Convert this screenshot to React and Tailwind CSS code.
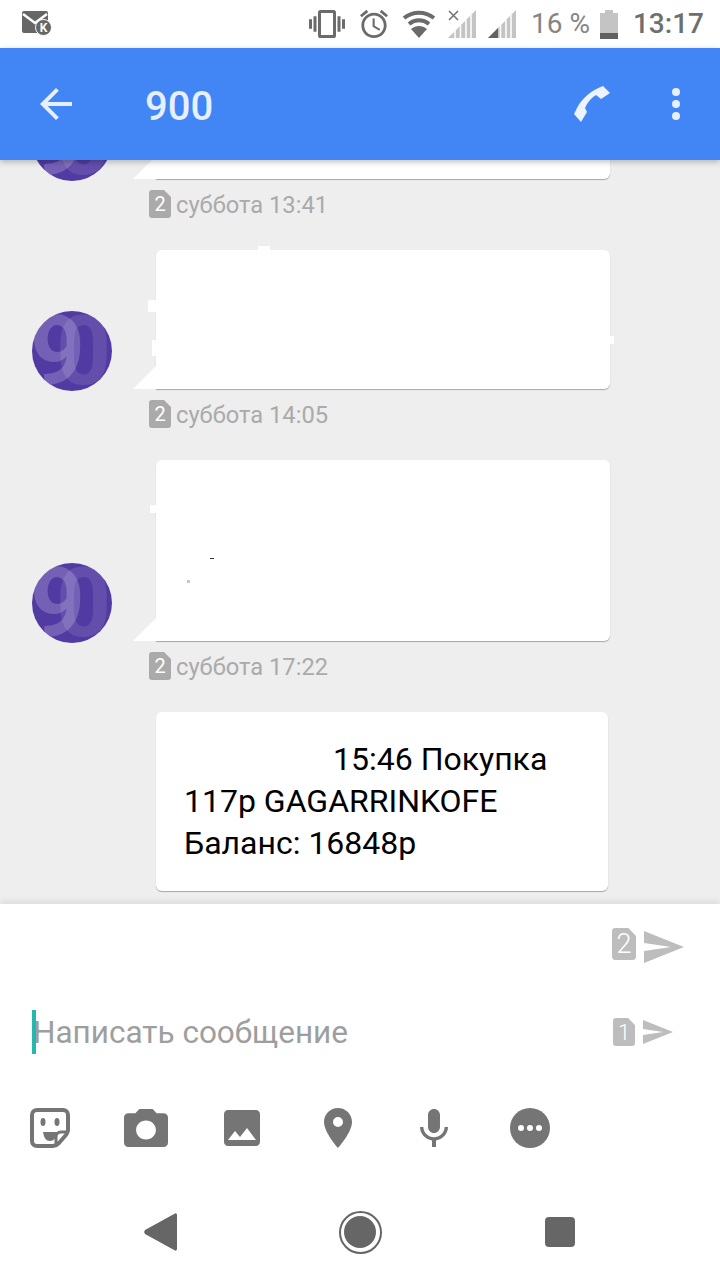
const Sim = ({ n, className, fill, textClass }) => (
    <div className={`relative shrink-0 flex items-center justify-center ${className}`}>
        <svg viewBox="0 0 22 28" preserveAspectRatio="none" className="absolute inset-0 w-full h-full">
            <path d="M3 0H15L22 7V25a3 3 0 0 1-3 3H3a3 3 0 0 1-3-3V3a3 3 0 0 1 3-3Z" fill={fill} />
        </svg>
        <span className={`relative text-white ${textClass}`}>{n}</span>
    </div>
);

const Send = ({ className }) => (
    <svg viewBox="0 0 40 32" preserveAspectRatio="none" className={className}>
        <path d="M0 0L40 16L0 32V20L27 16L0 12Z" fill="#bdbdbd" />
    </svg>
);

const Stamp = ({ time }) => (
    <div className="flex items-center h-7 mt-[11px] ml-[149px]">
        <Sim n="2" className="w-[22px] h-7" fill="#aaaaaa" textClass="text-[20px]" />
        <span className="ml-[5px] pt-[2px] text-[23.7px] leading-7 text-[#aaaaaa] whitespace-nowrap">{time}</span>
    </div>
);

const Avatar = () => (
    <div className="relative w-20 h-20 shrink-0 rounded-full overflow-hidden bg-[#523aa3] ml-8 -mb-[2px]">
        <span className="absolute -left-[2px] top-0 text-[96px] leading-[80px] font-bold text-white/20">9</span>
        <span className="absolute left-[24px] top-0 text-[96px] leading-[80px] font-bold text-white/10">0</span>
    </div>
);

const Tail = () => (
    <svg viewBox="0 0 23 23" className="absolute -left-[23px] bottom-0 w-[23px] h-[23px]">
        <path d="M23 0V23H0Z" fill="#ffffff" />
        <path d="M0 23.500H23" stroke="#c4c4c4" strokeWidth="1" />
    </svg>
);

const Message = ({ height, time, children }) => (
    <>
        <div className="flex items-end shrink-0">
            <Avatar />
            <div className={`relative ml-[44px] w-[454px] ${height} bg-white rounded-md rounded-bl-none shadow-[0_1px_1px_rgba(0,0,0,0.3)]`}>
                <Tail />
                {children}
            </div>
        </div>
        <Stamp time={time} />
    </>
);

const Speck = ({ className }) => <div className={`absolute bg-white ${className}`} />;

const Signal = ({ dark, cross }) => (
    <svg viewBox="0 0 28 28" className="w-7 h-7 shrink-0">
        <path d="M0 28L28 0V28Z" fill="#c4c4c4" />
        <path d="M7 28V20M12.500 28V15M18 28V10M23 28V5" stroke="#ffffff" strokeWidth="1.500" />
        {dark && <path d="M0 28L10 18V28Z" fill="#616161" />}
        {cross && <path d="M1 1L10 10M10 1L1 10" stroke="#757575" strokeWidth="1.600" />}
    </svg>
);

export default function App() {
    return (
        <div className="w-[720px] h-[1280px] flex flex-col overflow-hidden bg-white [font-family:Roboto,sans-serif]">
            {/* status bar */}
            <div className="h-12 shrink-0 flex items-center pl-[22px] pr-4 text-[#757575]">
                <div className="relative w-[30px] h-[25px] -mt-[1px]">
                    <svg viewBox="0 0 26 22" className="w-[26px] h-[22px]">
                        <rect width="26" height="22" rx="2" fill="#666666" />
                        <path d="M1 3L13 12L25 3" stroke="#ffffff" strokeWidth="2.500" fill="none" />
                    </svg>
                    <div className="absolute right-0 bottom-0 w-[17px] h-[17px] rounded-full bg-[#666666] border border-white flex items-center justify-center text-white text-[12px] leading-none font-bold">K</div>
                </div>
                <svg viewBox="0 3 24 18" className="ml-auto w-9 h-7 shrink-0" preserveAspectRatio="none">
                    <path fill="#6b6b6b" d="M0 15h2V9H0v6zm3 2h2V7H3v10zm19-8v6h2V9h-2zm-3 8h2V7h-2v10zM16.500 3h-9C6.670 3 6 3.670 6 4.500v15c0 .83.67 1.500 1.500 1.500h9c.83 0 1.500-.67 1.500-1.500v-15c0-.83-.67-1.500-1.500-1.500zM16 19H8V5h8v14z" />
                </svg>
                <svg viewBox="2 2 20 20" className="ml-[15px] w-7 h-7 shrink-0">
                    <path fill="#6b6b6b" d="M22 5.720l-4.600-3.860-1.290 1.530 4.600 3.860L22 5.720zM7.880 3.390L6.600 1.860 2 5.710l1.290 1.530 4.590-3.850zM12.500 8H11v6l4.750 2.850.75-1.230-4-2.370V8zM12 4c-4.970 0-9 4.030-9 9s4.030 9 9 9 9-4.030 9-9-4.030-9-9-9zm0 16c-3.870 0-7-3.130-7-7s3.130-7 7-7 7 3.130 7 7-3.130 7-7 7z" />
                </svg>
                <svg viewBox="0 0 34 28" className="ml-[14px] w-[34px] h-7 shrink-0">
                    <path d="M2 8C11 1 23 1 32 8M7 14C13 9 21 9 27 14" stroke="#6b6b6b" strokeWidth="4" fill="none" />
                    <path d="M17 28L9 19C14 15 20 15 25 19Z" fill="#6b6b6b" />
                </svg>
                <div className="ml-3 shrink-0"><Signal cross /></div>
                <div className="ml-3 shrink-0"><Signal dark /></div>
                <span className="ml-[15px] text-[28px] leading-none text-[#858585] whitespace-nowrap">16 %</span>
                <svg viewBox="0 0 18 29" className="ml-[10px] w-[18px] h-[29px] shrink-0">
                    <path d="M5 0H13V3H18V29H0V3H5Z" fill="#c4c4c4" />
                    <rect y="23" width="18" height="6" fill="#616161" />
                </svg>
                <span className="ml-[15px] text-[28px] leading-none font-medium text-[#6f6f6f] whitespace-nowrap">13:17</span>
            </div>

            {/* header */}
            <div className="relative z-10 h-[112px] shrink-0 flex items-center bg-[#4285f4] shadow-[0_2px_6px_rgba(0,0,0,0.25)]">
                <svg viewBox="4 4 16 16" className="ml-10 w-8 h-8 shrink-0">
                    <path fill="#e6effd" d="M20 11H7.830l5.590-5.590L12 4l-8 8 8 8 1.410-1.410L7.830 13H20v-2z" />
                </svg>
                <span className="ml-[73px] pt-[6px] text-[40px] leading-none font-medium text-[#e6effd]">900</span>
                <svg viewBox="0 0 38 38" className="ml-auto w-[38px] h-[38px] shrink-0">
                    <path fill="#ecf3fe" d="M29 1L36 8L27 14L22 10C17 13 13 18 11 23L13 27L7 37L0 29L3 23C8 13 18 5 29 1Z" />
                </svg>
                <div className="ml-[60px] mr-10 flex flex-col gap-1 shrink-0">
                    <div className="w-2 h-2 rounded-full bg-[#e6effd]" />
                    <div className="w-2 h-2 rounded-full bg-[#e6effd]" />
                    <div className="w-2 h-2 rounded-full bg-[#e6effd]" />
                </div>
            </div>

            {/* messages */}
            <div className="h-[744px] shrink-0 flex flex-col justify-end overflow-hidden bg-[#eeeeee] pb-[13px]">
                <Message height="h-[120px]" time="суббота 13:41" />
                <div className="h-8 shrink-0" />
                <Message height="h-[139px]" time="суббота 14:05">
                    <Speck className="-left-2 top-[50px] w-2 h-3" />
                    <Speck className="-left-1 top-[90px] w-1 h-4" />
                    <Speck className="left-[102px] -top-1 w-3 h-1" />
                    <Speck className="-right-1 top-[86px] w-1 h-2" />
                </Message>
                <div className="h-8 shrink-0" />
                <Message height="h-[181px]" time="суббота 17:22">
                    <Speck className="-left-[6px] top-[45px] w-[6px] h-2" />
                    <div className="absolute left-[54px] top-[98px] w-[4px] h-px bg-[#333333]" />
                    <div className="absolute left-[31px] top-[120px] w-[3px] h-[3px] bg-[#c8c8c8]" />
                </Message>
                <div className="h-8 shrink-0" />
                <div className="shrink-0 ml-[156px] w-[452px] h-[179px] bg-white rounded-md shadow-[0_1px_1px_rgba(0,0,0,0.3)] pt-[26px] pl-[28px] text-[32px] leading-[42px] text-black">
                    <div className="pl-[149px]">15:46 Покупка</div>
                    <div>117р GAGARRINKOFE</div>
                    <div>Баланс: 16848р</div>
                </div>
            </div>

            {/* composer */}
            <div className="relative flex-1 flex flex-col bg-white shadow-[0_-3px_6px_rgba(0,0,0,0.08)]">
                <div className="h-8 mt-6 flex items-center justify-end pr-9 shrink-0">
                    <Sim n="2" className="w-6 h-8" fill="#bdbdbd" textClass="text-[27px] font-light" />
                    <Send className="ml-2 mt-[6px] w-10 h-8" />
                </div>
                <div className="h-[44px] mt-[50px] flex items-center shrink-0">
                    <div className="ml-8 w-1 h-[44px] bg-[#26b8b0]" />
                    <span className="-ml-[3px] pt-[2px] text-[31.5px] leading-none text-[#9e9e9e] whitespace-nowrap">Написать сообщение</span>
                    <Sim n="1" className="ml-auto w-[22px] h-7" fill="#bdbdbd" textClass="text-[22px] font-light" />
                    <Send className="ml-2 mr-[47px] w-[30px] h-6" />
                </div>
                <div className="h-10 mt-[54px] flex items-center pl-[2px] shrink-0">
                    <div className="w-24 flex justify-center">
                        <svg viewBox="0 0 40 40" className="w-10 h-10">
                            <path d="M7 2H33C36 2 38 4 38 7V22C38 24 37 25 36 27L29 35C27 37 25 38 23 38H7C4 38 2 36 2 33V7C2 4 4 2 7 2Z" fill="none" stroke="#757575" strokeWidth="4" />
                            <path d="M37 24H31C28 24 26 26 26 29V37" fill="none" stroke="#757575" strokeWidth="3" />
                            <ellipse cx="13" cy="14" rx="2.500" ry="4" fill="#757575" />
                            <ellipse cx="27" cy="14" rx="2.500" ry="4" fill="#757575" />
                            <path d="M13 24H27C26 30 24 33 20 33C16 33 14 30 13 24Z" fill="#757575" />
                        </svg>
                    </div>
                    <div className="w-24 flex justify-center">
                        <svg viewBox="2 2 20 18" className="w-11 h-[38px]" preserveAspectRatio="none">
                            <path fill="#757575" d="M9 2L7.170 4H4c-1.100 0-2 .9-2 2v12c0 1.100.9 2 2 2h16c1.100 0 2-.9 2-2V6c0-1.100-.9-2-2-2h-3.170L15 2H9zm3 14.500c-2.500 0-4.500-2-4.500-4.500s2-4.500 4.500-4.500 4.500 2 4.500 4.500-2 4.500-4.500 4.500z" />
                        </svg>
                    </div>
                    <div className="w-24 flex justify-center">
                        <svg viewBox="3 3 18 18" className="w-9 h-9">
                            <path fill="#757575" d="M21 19V5c0-1.100-.9-2-2-2H5c-1.100 0-2 .9-2 2v14c0 1.100.9 2 2 2h14c1.100 0 2-.9 2-2zM8.500 13.500l2.500 3.010L14.500 12l4.500 6H5l3.500-4.500z" />
                        </svg>
                    </div>
                    <div className="w-24 flex justify-center">
                        <svg viewBox="5 2 14 20" className="w-7 h-10">
                            <path fill="#757575" d="M12 2C8.130 2 5 5.130 5 9c0 5.250 7 13 7 13s7-7.750 7-13c0-3.870-3.130-7-7-7zm0 9.500a2.500 2.500 0 0 1 0-5 2.500 2.500 0 0 1 0 5z" />
                        </svg>
                    </div>
                    <div className="w-24 flex justify-center">
                        <svg viewBox="5 2 14 19" className="w-7 h-[38px]">
                            <path fill="#757575" d="M12 14c1.660 0 2.990-1.340 2.990-3L15 5c0-1.660-1.340-3-3-3S9 3.340 9 5v6c0 1.660 1.340 3 3 3zm5.300-3c0 3-2.540 5.100-5.300 5.100S6.700 14 6.700 11H5c0 3.410 2.720 6.230 6 6.720V21h2v-3.280c3.280-.48 6-3.300 6-6.720h-1.700z" />
                        </svg>
                    </div>
                    <div className="w-24 flex justify-center">
                        <div className="w-10 h-10 rounded-full bg-[#757575] flex items-center justify-center gap-[3px]">
                            <div className="w-[6px] h-[6px] rounded-full bg-white" />
                            <div className="w-[6px] h-[6px] rounded-full bg-white" />
                            <div className="w-[6px] h-[6px] rounded-full bg-white" />
                        </div>
                    </div>
                </div>

                {/* nav bar */}
                <div className="mt-[62px] h-[44px] flex items-center pl-[60px] shrink-0">
                    <div className="w-[200px] flex justify-center">
                        <svg viewBox="0 0 33 38" className="w-[33px] h-[38px]">
                            <path fill="#666666" d="M31 0.500C32 0 33 1 33 2V36C33 37 32 38 31 37.500L1 21C0 20 0 18 1 17Z" />
                        </svg>
                    </div>
                    <div className="w-[200px] flex justify-center">
                        <div className="w-[43px] h-[43px] rounded-full border-2 border-[#666666] flex items-center justify-center">
                            <div className="w-8 h-8 rounded-full bg-[#666666]" />
                        </div>
                    </div>
                    <div className="w-[200px] flex justify-center">
                        <div className="w-[30px] h-[30px] rounded-sm bg-[#666666]" />
                    </div>
                </div>
            </div>
        </div>
    );
}
